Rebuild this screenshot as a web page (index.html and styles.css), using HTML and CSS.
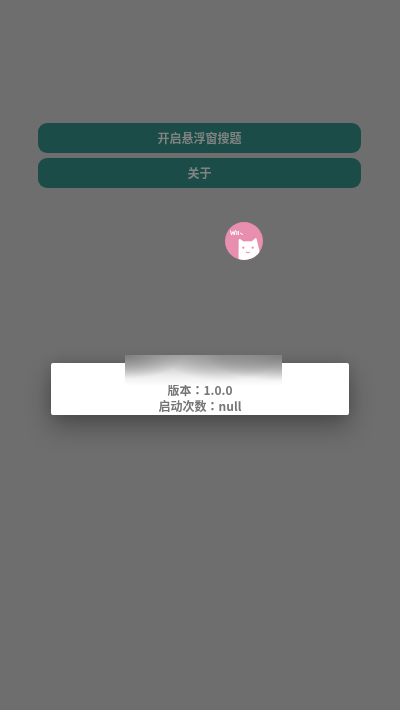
FILE: index.html
```html
<!DOCTYPE html>
<html lang="zh">
<head>
<meta charset="utf-8">
<title>开启悬浮窗搜题</title>
<link rel="stylesheet" href="styles.css">
</head>
<body>
<main class="screen">
  <div class="actions">
    <button class="action">开启悬浮窗搜题</button>
    <button class="action">关于</button>
  </div>
  <div class="bubble" aria-label="悬浮窗">
    <svg viewBox="0 0 38 38" width="38" height="38">
      <defs><clipPath id="round"><circle cx="19" cy="19" r="19"/></clipPath></defs>
      <circle cx="19" cy="19" r="19" fill="#e88fb0"/>
      <g clip-path="url(#round)">
        <path d="M13.5 38 L13.7 18 Q14 16.4 15.5 17.2 L18.5 19.6 Q23 18.8 26.5 19.4 L30 16.4 Q31.2 15.6 31.6 17 L34 27 L36 38 Z" fill="#fff"/>
        <circle cx="18.3" cy="25.7" r="1.1" fill="#e88fb0"/>
        <circle cx="27.7" cy="25.7" r="1.1" fill="#e88fb0"/>
        <path d="M21 29.8 Q22.8 31.6 24.6 29.8" fill="none" stroke="#e88fb0" stroke-width="1.1"/>
      </g>
      <path d="M5.5 8.5 L6.5 13 L8 9.5 L9.3 13 L10.3 8 M11.8 9 V13 M13.4 9 V13 M15 11 L18 12.6" fill="none" stroke="#fff" stroke-width="1"/>
    </svg>
  </div>
  <section class="dialog">
    <p class="line">版本<span class="colon" lang="zh-Hant">：</span>1.0.0</p>
    <p class="line">启动次数<span class="colon" lang="zh-Hant">：</span>null</p>
  </section>
  <div class="smudge"></div>
</main>
</body>
</html>
```

FILE: styles.css
```css
* { box-sizing: border-box; }
html, body { margin: 0; height: 100%; }
body {
  background: #6e6e6e;
  font-family: "Noto Sans CJK SC", "Roboto", sans-serif;
  overflow: hidden;
}
.screen {
  position: relative;
  width: 400px;
  height: 710px;
  padding: 123px 39px 0 38px;
  filter: blur(0.6px);
}
.actions {
  display: flex;
  flex-direction: column;
  gap: 5px;
}
.action {
  height: 30px;
  border: 0;
  padding: 0 0 1px;
  border-radius: 9px;
  background: #1c4c48;
  color: #7f8482;
  font: 700 12px/29px "Noto Sans CJK SC", sans-serif;
  text-align: center;
}
.bubble {
  position: absolute;
  left: 225px;
  top: 222px;
  width: 38px;
  height: 38px;
}
.bubble svg { display: block; }
.dialog {
  position: absolute;
  left: 51px;
  top: 363px;
  width: 298px;
  height: 52px;
  padding-top: 19px;
  background: #fff;
  border-radius: 2px;
  box-shadow: 0 12px 26px rgba(0, 0, 0, 0.3), 0 0 16px rgba(0, 0, 0, 0.14);
  text-align: center;
  color: #767676;
}
.line {
  margin: 0;
  font: 700 12px/16px "Noto Sans CJK SC", "Roboto", sans-serif;
}
.colon { font-family: "Noto Sans CJK TC", sans-serif; }
.smudge {
  position: absolute;
  left: 125px;
  top: 355px;
  width: 157px;
  height: 30px;
  background:
    radial-gradient(ellipse 60px 24px at 0 0, rgba(125, 125, 125, 0.95), rgba(125, 125, 125, 0) 100%),
    radial-gradient(ellipse 75px 26px at 100% 0, rgba(125, 125, 125, 0.95), rgba(125, 125, 125, 0) 100%),
    radial-gradient(ellipse 60px 26px at 62% 0, rgba(140, 140, 140, 0.8), rgba(140, 140, 140, 0) 100%),
    linear-gradient(#a9a9a9, #ededed 70%, #fdfdfd);
}
```
